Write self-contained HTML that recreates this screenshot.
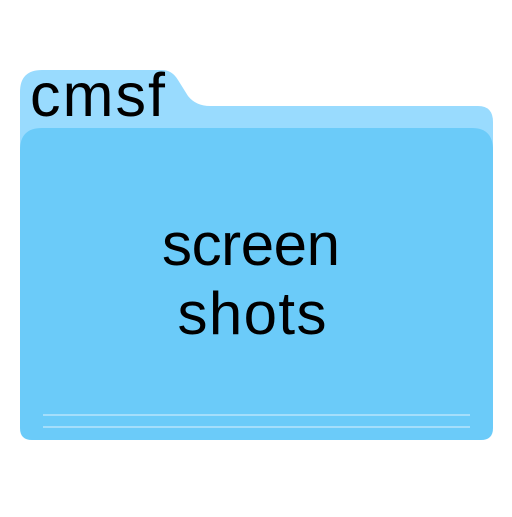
<!DOCTYPE html>
<html><head><style>
body{margin:0;width:512px;height:512px;background:#fff;overflow:hidden}
</style></head><body>
<svg width="512" height="512" viewBox="0 0 512 512">
<path d="M20 92 Q20 70 42 70 L162 70 Q172 70 178 80 L188 96 Q196 106 210 106 L478 106 Q493 106 493 122 L493 300 L20 300 Z" fill="#99dbfe"/>
<path d="M20 150 Q20 128 42 128 L472 128 Q493 128 493 150 L493 428 Q493 440 481 440 L32 440 Q20 440 20 428 Z" fill="#6bcbf9"/>
<rect x="43" y="414" width="427" height="2" fill="#a4defb"/>
<rect x="43" y="426" width="427" height="2" fill="#a4defb"/>
<text x="30" y="116" font-family="Liberation Sans, sans-serif" font-size="61" textLength="135" fill="#000">cmsf</text>
<text x="251" y="265" text-anchor="middle" font-family="Liberation Sans, sans-serif" font-size="60" textLength="178" fill="#000">screen</text>
<text x="252" y="334" text-anchor="middle" font-family="Liberation Sans, sans-serif" font-size="60" textLength="149" fill="#000">shots</text>
</svg>
</body></html>
